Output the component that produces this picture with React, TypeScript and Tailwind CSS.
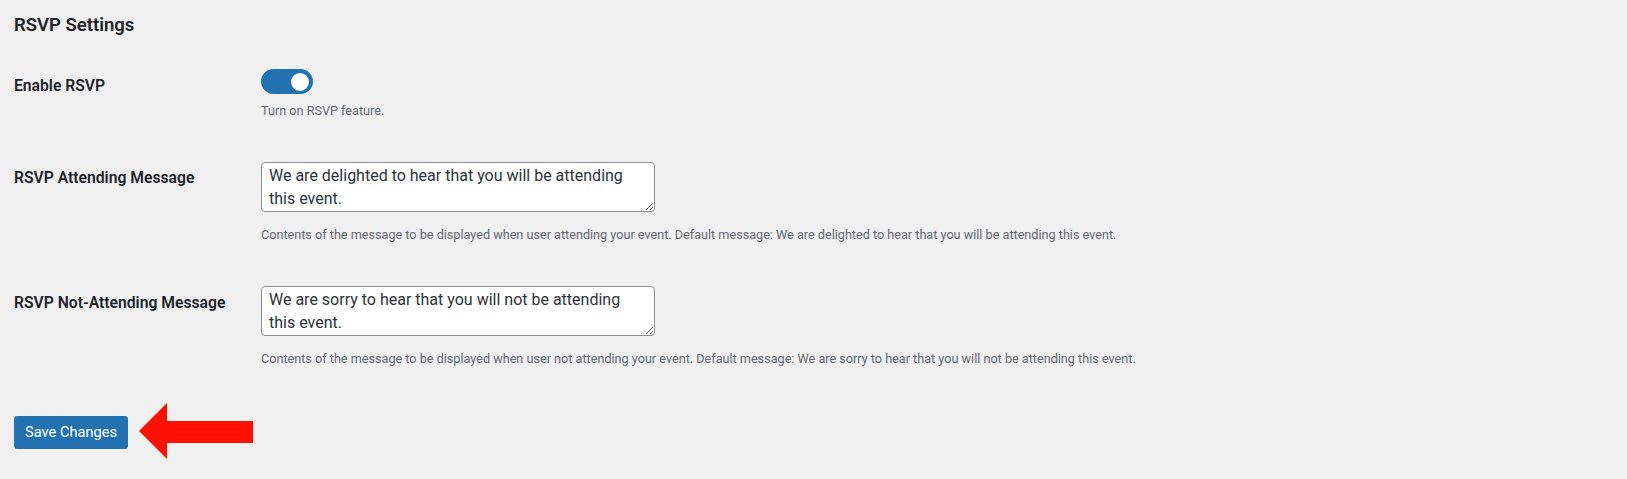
import { useState } from 'react';

const FONT = "font-['Roboto',sans-serif]";

function Toggle({ on, onChange }: { on: boolean; onChange: (v: boolean) => void }) {
  return (
    <button
      type="button"
      onClick={() => onChange(!on)}
      className={`relative flex items-center w-[52px] h-[25px] rounded-full ${on ? 'bg-[#2271b1] justify-end' : 'bg-[#8c8f94] justify-start'} px-[4px]`}
    >
      <span className="block w-[18px] h-[18px] rounded-full bg-white" />
    </button>
  );
}

function Row({ label, labelOffset, children }: { label: string; labelOffset: string; children: React.ReactNode }) {
  return (
    <div className="flex">
      <div className={`w-[247px] shrink-0 ${labelOffset} text-[15.7px] leading-[20px] font-semibold text-[#1d2327]`}>{label}</div>
      <div className="flex-1">{children}</div>
    </div>
  );
}

function Desc({ children, className = '' }: { children: React.ReactNode; className?: string }) {
  return <p className={`text-[12.65px] leading-[18px] text-[#646970] ${className}`}>{children}</p>;
}

export default function App() {
  const [enabled, setEnabled] = useState(true);

  return (
    <div className={`min-h-screen bg-[#f0f0f1] px-[14px] pt-[13px] ${FONT}`}>
      <h2 className="text-[18.5px] leading-[24px] font-semibold text-[#1d2327]">RSVP Settings</h2>

      <div className="mt-[32px]">
        <Row label="Enable RSVP" labelOffset="mt-[7px]">
          <Toggle on={enabled} onChange={setEnabled} />
          <Desc className="mt-[8px]">Turn on RSVP feature.</Desc>
        </Row>
      </div>

      <div className="mt-[42px]">
        <Row label="RSVP Attending Message" labelOffset="mt-[6px]">
          <textarea
            defaultValue="We are delighted to hear that you will be attending this event."
            className="block w-[394px] h-[50px] bg-white border border-[#8c8f94] rounded-[4px] px-[7px] pt-[1px] text-[16px] leading-[23px] text-[#2c3338] outline-none"
          />
          <Desc className="mt-[14px]">
            Contents of the message to be displayed when user attending your event. Default message: We are delighted to hear that you will be attending this event.
          </Desc>
        </Row>
      </div>

      <div className="mt-[42px]">
        <Row label="RSVP Not-Attending Message" labelOffset="mt-[7px]">
          <textarea
            defaultValue="We are sorry to hear that you will not be attending this event."
            className="block w-[394px] h-[50px] bg-white border border-[#8c8f94] rounded-[4px] px-[7px] pt-[1px] text-[16px] leading-[23px] text-[#2c3338] outline-none"
          />
          <Desc className="mt-[14px]">
            Contents of the message to be displayed when user not attending your event. Default message: We are sorry to hear that you will not be attending this event.
          </Desc>
        </Row>
      </div>

      <div className="mt-[48px] flex items-start">
        <button
          type="button"
          className="w-[114px] h-[33px] bg-[#2271b1] border border-[#2271b1] rounded-[3px] text-white text-[14.6px]"
        >
          Save Changes
        </button>
        <svg width="114" height="56" viewBox="0 0 114 56" className="ml-[11px] -mt-[13px]">
          <polygon points="0,28 28,0 28,18 114,18 114,40 28,40 28,56" fill="#ff1000" />
        </svg>
      </div>
    </div>
  );
}
